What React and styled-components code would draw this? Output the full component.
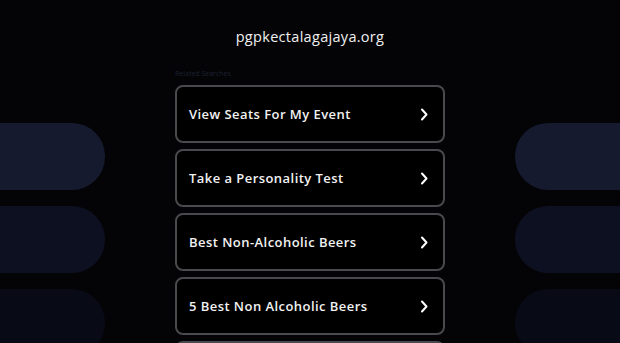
import React from 'react';
import styled, { createGlobalStyle } from 'styled-components';

const GlobalStyle = createGlobalStyle`
  html, body {
    margin: 0;
    padding: 0;
    background: #040407;
    overflow: hidden;
  }
`;

const links = [
  'View Seats For My Event',
  'Take a Personality Test',
  'Best Non-Alcoholic Beers',
  '5 Best Non Alcoholic Beers',
  'Top Rated Beers',
];

const pillColors = ['#151a2e', '#0d1020', '#080a15'];

function Chevron() {
  return (
    <svg width="9" height="13" viewBox="0 0 9 13" fill="none">
      <path d="M2 1.5 L6.5 6.5 L2 11.5" stroke="#ffffff" strokeWidth="2" strokeLinecap="round" strokeLinejoin="round" />
    </svg>
  );
}

function App() {
  return (
    <Page>
      <GlobalStyle />
      <Side side="left">
        {pillColors.map((c, idx) => (
          <Pill key={idx} color={c} side="left" />
        ))}
      </Side>
      <Center>
        <Domain>pgpkectalagajaya.org</Domain>
        <Label>Related Searches</Label>
        <List>
          {links.map((text, idx) => (
            <LinkButton key={idx}>
              <span>{text}</span>
              <Chevron />
            </LinkButton>
          ))}
        </List>
      </Center>
      <Side side="right">
        {pillColors.map((c, idx) => (
          <Pill key={idx} color={c} side="right" />
        ))}
      </Side>
    </Page>
  );
}

const Page = styled.div`
  width: 620px;
  height: 343px;
  overflow: hidden;
  display: grid;
  grid-template-columns: 105px 1fr 270px 1fr 105px;
  font-family: "Open Sans", "Noto Sans", sans-serif;
`;

const Side = styled.div`
  grid-column: ${(p) => (p.side === 'left' ? '1' : '5')};
  display: flex;
  flex-direction: column;
  gap: 16px;
  padding-top: 123px;
`;

const Pill = styled.div`
  height: 67px;
  flex-shrink: 0;
  background: ${(p) => p.color};
  border-radius: ${(p) => (p.side === 'left' ? '0 33px 33px 0' : '33px 0 0 33px')};
`;

const Center = styled.div`
  grid-column: 3;
  display: flex;
  flex-direction: column;
  align-items: stretch;
`;

const Domain = styled.div`
  margin-top: 27px;
  height: 20px;
  line-height: 20px;
  text-align: center;
  color: #f0f0f0;
  font-size: 14.5px;
  font-weight: 500;
  letter-spacing: 0.3px;
`;

const Label = styled.div`
  margin-top: 22px;
  height: 10px;
  line-height: 10px;
  font-size: 7px;
  color: #1e2030;
`;

const List = styled.div`
  margin-top: 6px;
  display: flex;
  flex-direction: column;
  gap: 6px;
`;

const LinkButton = styled.div`
  box-sizing: border-box;
  height: 58px;
  flex-shrink: 0;
  border: 2px solid #4a4a4e;
  border-radius: 8px;
  background: #000000;
  display: flex;
  align-items: center;
  justify-content: space-between;
  padding: 0 14px 0 12px;
  color: #f2f2f2;
  font-size: 13px;
  font-weight: 600;
  letter-spacing: 0.45px;
`;

export default App;
